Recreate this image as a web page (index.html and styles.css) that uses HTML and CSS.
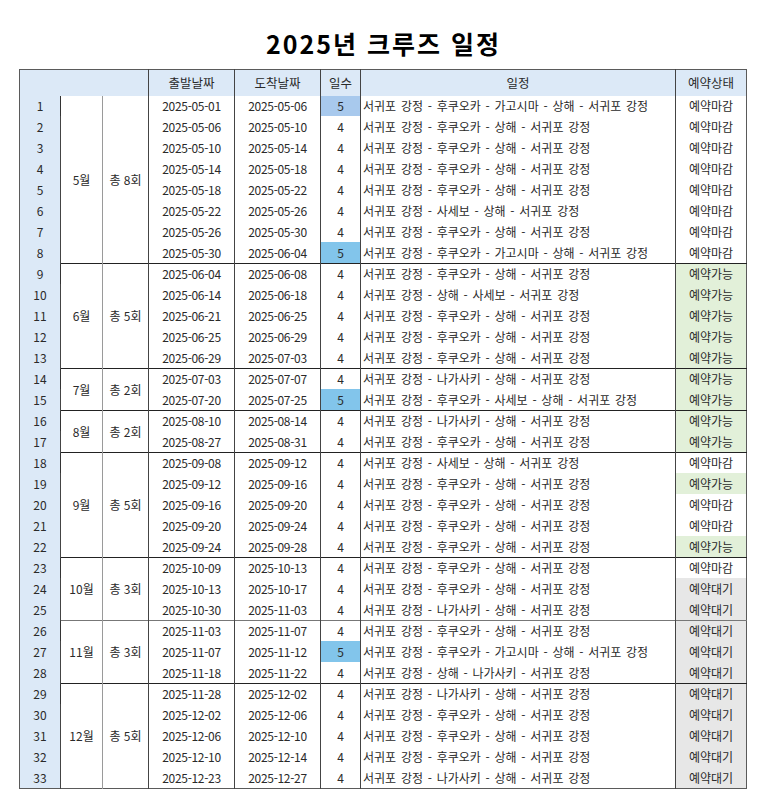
FILE: index.html
```html
<!DOCTYPE html>
<html lang="ko">
<head>
<meta charset="utf-8">
<title>2025년 크루즈 일정</title>
<link rel="stylesheet" href="styles.css">
</head>
<body>
<h1 class="title">2025년 크루즈 일정</h1>
<table class="sched">
<colgroup>
<col class="c-no"><col class="c-mon"><col class="c-cnt"><col class="c-date"><col class="c-date"><col class="c-days"><col class="c-route"><col class="c-stat">
</colgroup>
<thead>
<tr><th colspan="3" class="h-blank"></th><th>출발날짜</th><th>도착날짜</th><th>일수</th><th>일정</th><th>예약상태</th></tr>
</thead>
<tbody>
<tr class="grp"><td class="no">1</td><td class="mon" rowspan="8">5월</td><td class="cnt" rowspan="8">총 8회</td><td class="date">2025-05-01</td><td class="date">2025-05-06</td><td class="days hl-light">5</td><td class="route">서귀포 강정 - 후쿠오카 - 가고시마 - 상해 - 서귀포 강정</td><td class="stat">예약마감</td></tr>
<tr><td class="no">2</td><td class="date">2025-05-06</td><td class="date">2025-05-10</td><td class="days">4</td><td class="route">서귀포 강정 - 후쿠오카 - 상해 - 서귀포 강정</td><td class="stat">예약마감</td></tr>
<tr><td class="no">3</td><td class="date">2025-05-10</td><td class="date">2025-05-14</td><td class="days">4</td><td class="route">서귀포 강정 - 후쿠오카 - 상해 - 서귀포 강정</td><td class="stat">예약마감</td></tr>
<tr><td class="no">4</td><td class="date">2025-05-14</td><td class="date">2025-05-18</td><td class="days">4</td><td class="route">서귀포 강정 - 후쿠오카 - 상해 - 서귀포 강정</td><td class="stat">예약마감</td></tr>
<tr><td class="no">5</td><td class="date">2025-05-18</td><td class="date">2025-05-22</td><td class="days">4</td><td class="route">서귀포 강정 - 후쿠오카 - 상해 - 서귀포 강정</td><td class="stat">예약마감</td></tr>
<tr><td class="no">6</td><td class="date">2025-05-22</td><td class="date">2025-05-26</td><td class="days">4</td><td class="route">서귀포 강정 - 사세보 - 상해 - 서귀포 강정</td><td class="stat">예약마감</td></tr>
<tr><td class="no">7</td><td class="date">2025-05-26</td><td class="date">2025-05-30</td><td class="days">4</td><td class="route">서귀포 강정 - 후쿠오카 - 상해 - 서귀포 강정</td><td class="stat">예약마감</td></tr>
<tr><td class="no">8</td><td class="date">2025-05-30</td><td class="date">2025-06-04</td><td class="days hl">5</td><td class="route">서귀포 강정 - 후쿠오카 - 가고시마 - 상해 - 서귀포 강정</td><td class="stat">예약마감</td></tr>

<tr class="grp"><td class="no">9</td><td class="mon" rowspan="5">6월</td><td class="cnt" rowspan="5">총 5회</td><td class="date">2025-06-04</td><td class="date">2025-06-08</td><td class="days">4</td><td class="route">서귀포 강정 - 후쿠오카 - 상해 - 서귀포 강정</td><td class="stat open">예약가능</td></tr>
<tr><td class="no">10</td><td class="date">2025-06-14</td><td class="date">2025-06-18</td><td class="days">4</td><td class="route">서귀포 강정 - 상해 - 사세보 - 서귀포 강정</td><td class="stat open">예약가능</td></tr>
<tr><td class="no">11</td><td class="date">2025-06-21</td><td class="date">2025-06-25</td><td class="days">4</td><td class="route">서귀포 강정 - 후쿠오카 - 상해 - 서귀포 강정</td><td class="stat open">예약가능</td></tr>
<tr><td class="no">12</td><td class="date">2025-06-25</td><td class="date">2025-06-29</td><td class="days">4</td><td class="route">서귀포 강정 - 후쿠오카 - 상해 - 서귀포 강정</td><td class="stat open">예약가능</td></tr>
<tr><td class="no">13</td><td class="date">2025-06-29</td><td class="date">2025-07-03</td><td class="days">4</td><td class="route">서귀포 강정 - 후쿠오카 - 상해 - 서귀포 강정</td><td class="stat open">예약가능</td></tr>

<tr class="grp"><td class="no">14</td><td class="mon" rowspan="2">7월</td><td class="cnt" rowspan="2">총 2회</td><td class="date">2025-07-03</td><td class="date">2025-07-07</td><td class="days">4</td><td class="route">서귀포 강정 - 나가사키 - 상해 - 서귀포 강정</td><td class="stat open">예약가능</td></tr>
<tr><td class="no">15</td><td class="date">2025-07-20</td><td class="date">2025-07-25</td><td class="days hl">5</td><td class="route">서귀포 강정 - 후쿠오카 - 사세보 - 상해 - 서귀포 강정</td><td class="stat open">예약가능</td></tr>

<tr class="grp"><td class="no">16</td><td class="mon" rowspan="2">8월</td><td class="cnt" rowspan="2">총 2회</td><td class="date">2025-08-10</td><td class="date">2025-08-14</td><td class="days">4</td><td class="route">서귀포 강정 - 나가사키 - 상해 - 서귀포 강정</td><td class="stat open">예약가능</td></tr>
<tr><td class="no">17</td><td class="date">2025-08-27</td><td class="date">2025-08-31</td><td class="days">4</td><td class="route">서귀포 강정 - 후쿠오카 - 상해 - 서귀포 강정</td><td class="stat open">예약가능</td></tr>

<tr class="grp"><td class="no">18</td><td class="mon" rowspan="5">9월</td><td class="cnt" rowspan="5">총 5회</td><td class="date">2025-09-08</td><td class="date">2025-09-12</td><td class="days">4</td><td class="route">서귀포 강정 - 사세보 - 상해 - 서귀포 강정</td><td class="stat">예약마감</td></tr>
<tr><td class="no">19</td><td class="date">2025-09-12</td><td class="date">2025-09-16</td><td class="days">4</td><td class="route">서귀포 강정 - 후쿠오카 - 상해 - 서귀포 강정</td><td class="stat open">예약가능</td></tr>
<tr><td class="no">20</td><td class="date">2025-09-16</td><td class="date">2025-09-20</td><td class="days">4</td><td class="route">서귀포 강정 - 후쿠오카 - 상해 - 서귀포 강정</td><td class="stat">예약마감</td></tr>
<tr><td class="no">21</td><td class="date">2025-09-20</td><td class="date">2025-09-24</td><td class="days">4</td><td class="route">서귀포 강정 - 후쿠오카 - 상해 - 서귀포 강정</td><td class="stat">예약마감</td></tr>
<tr><td class="no">22</td><td class="date">2025-09-24</td><td class="date">2025-09-28</td><td class="days">4</td><td class="route">서귀포 강정 - 후쿠오카 - 상해 - 서귀포 강정</td><td class="stat open">예약가능</td></tr>

<tr class="grp"><td class="no">23</td><td class="mon" rowspan="3">10월</td><td class="cnt" rowspan="3">총 3회</td><td class="date">2025-10-09</td><td class="date">2025-10-13</td><td class="days">4</td><td class="route">서귀포 강정 - 후쿠오카 - 상해 - 서귀포 강정</td><td class="stat">예약마감</td></tr>
<tr><td class="no">24</td><td class="date">2025-10-13</td><td class="date">2025-10-17</td><td class="days">4</td><td class="route">서귀포 강정 - 후쿠오카 - 상해 - 서귀포 강정</td><td class="stat wait">예약대기</td></tr>
<tr><td class="no">25</td><td class="date">2025-10-30</td><td class="date">2025-11-03</td><td class="days">4</td><td class="route">서귀포 강정 - 나가사키 - 상해 - 서귀포 강정</td><td class="stat wait">예약대기</td></tr>

<tr class="grp soft"><td class="no">26</td><td class="mon" rowspan="3">11월</td><td class="cnt" rowspan="3">총 3회</td><td class="date">2025-11-03</td><td class="date">2025-11-07</td><td class="days">4</td><td class="route">서귀포 강정 - 후쿠오카 - 상해 - 서귀포 강정</td><td class="stat wait">예약대기</td></tr>
<tr><td class="no">27</td><td class="date">2025-11-07</td><td class="date">2025-11-12</td><td class="days hl">5</td><td class="route">서귀포 강정 - 후쿠오카 - 가고시마 - 상해 - 서귀포 강정</td><td class="stat wait">예약대기</td></tr>
<tr><td class="no">28</td><td class="date">2025-11-18</td><td class="date">2025-11-22</td><td class="days">4</td><td class="route">서귀포 강정 - 상해 - 나가사키 - 서귀포 강정</td><td class="stat wait">예약대기</td></tr>

<tr class="grp"><td class="no">29</td><td class="mon" rowspan="5">12월</td><td class="cnt" rowspan="5">총 5회</td><td class="date">2025-11-28</td><td class="date">2025-12-02</td><td class="days">4</td><td class="route">서귀포 강정 - 나가사키 - 상해 - 서귀포 강정</td><td class="stat wait">예약대기</td></tr>
<tr><td class="no">30</td><td class="date">2025-12-02</td><td class="date">2025-12-06</td><td class="days">4</td><td class="route">서귀포 강정 - 후쿠오카 - 상해 - 서귀포 강정</td><td class="stat wait">예약대기</td></tr>
<tr><td class="no">31</td><td class="date">2025-12-06</td><td class="date">2025-12-10</td><td class="days">4</td><td class="route">서귀포 강정 - 후쿠오카 - 상해 - 서귀포 강정</td><td class="stat wait">예약대기</td></tr>
<tr><td class="no">32</td><td class="date">2025-12-10</td><td class="date">2025-12-14</td><td class="days">4</td><td class="route">서귀포 강정 - 후쿠오카 - 상해 - 서귀포 강정</td><td class="stat wait">예약대기</td></tr>
<tr><td class="no">33</td><td class="date">2025-12-23</td><td class="date">2025-12-27</td><td class="days">4</td><td class="route">서귀포 강정 - 나가사키 - 상해 - 서귀포 강정</td><td class="stat wait">예약대기</td></tr>
</tbody>
</table>
</body>
</html>
```

FILE: styles.css
```css
html, body {
  margin: 0;
  padding: 0;
  background: #ffffff;
}

body {
  font-family: "Noto Sans CJK KR", "Noto Sans", sans-serif;
  color: #222222;
}

.title {
  margin: 0;
  height: 69px;
  box-sizing: border-box;
  padding-top: 27px;
  padding-left: 2px;
  line-height: 32px;
  font-size: 25px;
  font-weight: 700;
  letter-spacing: 2px;
  text-align: center;
  color: #000000;
}

.sched {
  margin-left: 19px;
  border-collapse: collapse;
  table-layout: fixed;
  width: 727px;
  border: 1px solid #5a5a5a;
  font-size: 12px;
}

.c-no { width: 41px; }
.c-mon { width: 42px; }
.c-cnt { width: 46px; }
.c-date { width: 86px; }
.c-days { width: 40px; }
.c-route { width: 315px; }
.c-stat { width: 71px; }

.sched th,
.sched td {
  padding: 0;
  text-align: center;
  white-space: nowrap;
  overflow: hidden;
  line-height: 20px;
  color: #2a2a2a;
}

.sched th {
  height: 26px;
  font-weight: 400;
  font-size: 12.5px;
  background: #dce9f7;
  border-left: 1px solid #444444;
}

.sched th.h-blank {
  border-left: none;
}

.sched td {
  height: 21px;
  border-left: 1px solid #444444;
}

.sched tr.grp td {
  height: 20px;
}

.sched td.no {
  background: #dce9f7;
  border-left: none;
  border-right: 1px solid #333333;
}

.sched td.mon {
  border-right: 1px solid #9a9a9a;
}

.sched td.cnt {
  border-left: 1px solid #9a9a9a;
}

.sched td.date {
  letter-spacing: -0.3px;
}

.sched tr.grp td:not(.no) {
  border-top: 1px solid #222222;
}

.sched tr.grp.soft td:not(.no) {
  border-top: 1px solid #777777;
}

.sched tr:first-child td:not(.no) {
  border-top: none;
}

.sched td.route {
  text-align: left;
  padding-left: 2px;
  word-spacing: 1.4px;
}

.sched td.hl {
  background: #82c5eb;
}

.sched td.hl-light {
  background: #a8c9ed;
}

.sched td.open {
  background: #e2f0d9;
}

.sched td.wait {
  background: #e7e7e7;
}
```
